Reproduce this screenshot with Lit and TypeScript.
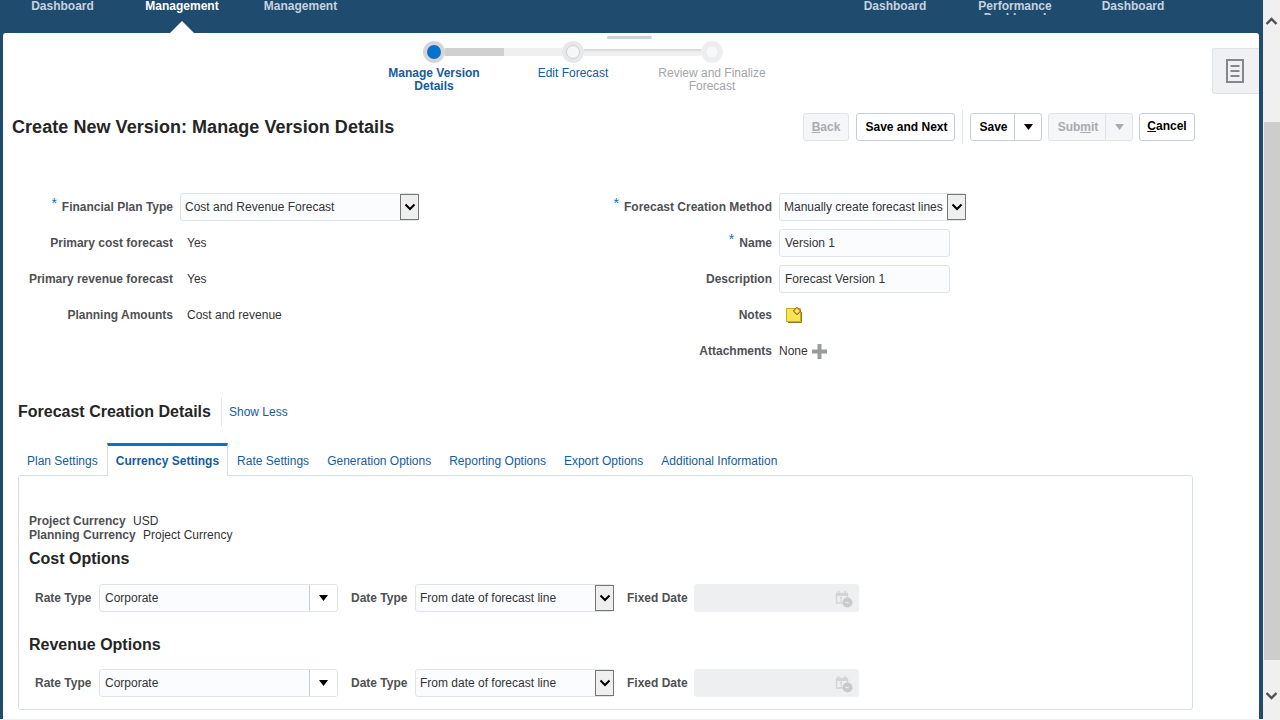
import { LitElement, html, css, svg } from "lit";
import { customElement } from "lit/decorators.js";

const chevron = html`<svg width="12" height="8" viewBox="0 0 12 8"><path d="M1.5 1.5 L6 6 L10.5 1.5" fill="none" stroke="#000" stroke-width="2"/></svg>`;
const arrow = (color: string) =>
  html`<svg width="9" height="6" viewBox="0 0 9 6"><path d="M0 0 H9 L4.5 6 Z" fill="${color}"/></svg>`;

const calIcon = svg`<svg width="18" height="18" viewBox="0 0 18 18">
  <path d="M1.5 3.5 H12.5 V13 H1.5 Z" fill="none" stroke="#d3d4d6" stroke-width="1.4"/>
  <path d="M1 3 H13 V6 H1 Z" fill="#d3d4d6"/>
  <path d="M3.5 1 V4 M10 1 V4" stroke="#d3d4d6" stroke-width="1.6"/>
  <path d="M5 8 L6.3 7.2 V12" fill="none" stroke="#d3d4d6" stroke-width="1.1"/>
  <circle cx="12.5" cy="12.5" r="5" fill="#c9cacc"/>
  <path d="M10.5 12.5 H13.5" stroke="#eeeff0" stroke-width="1.2"/>
</svg>`;

@customElement("app-root")
export class AppRoot extends LitElement {
  static styles = css`
    :host {
      display: block;
      width: 1280px;
      height: 720px;
      overflow: hidden;
      position: relative;
      background: #1f4b6e;
      font-family: "Liberation Sans", Arial, sans-serif;
      font-size: 12px;
      color: #333;
    }
    .shell {
      display: flex;
      height: 719px;
    }
    .main {
      width: 1263px;
    }
    .bottom {
      height: 1px;
      background: #eceef0;
    }

    /* top nav */
    .nav {
      height: 33px;
      position: relative;
      display: flex;
      font-weight: bold;
      line-height: 12px;
      color: #c4d3e0;
    }
    .nav-item {
      width: 74px;
      height: 15px;
      overflow: hidden;
      text-align: center;
      flex: none;
    }
    .nav-item.on {
      color: #fff;
    }
    .notch {
      position: absolute;
      left: 170px;
      top: 21px;
      width: 0;
      height: 0;
      border-left: 12px solid transparent;
      border-right: 12px solid transparent;
      border-bottom: 12px solid #fff;
    }

    .panel {
      position: relative;
      height: 686px;
      margin: 0 4px 0 3px;
      background: #fff;
      border-radius: 3px 3px 0 0;
    }
    .handle {
      position: absolute;
      left: 604px;
      top: 3px;
      width: 45px;
      height: 3px;
      border-radius: 2px;
      background: #cdd1de;
    }
    .side-tab {
      position: absolute;
      right: 0;
      top: 15px;
      width: 47px;
      height: 46px;
      box-sizing: border-box;
      background: #f0f1f2;
      border: 1px solid #dfe2e6;
      border-right: none;
      border-radius: 3px 0 0 3px;
      display: flex;
      align-items: center;
      justify-content: center;
      padding-right: 3px;
    }

    /* train */
    .train {
      display: flex;
      padding: 8px 0 0 361.5px;
      height: 51px;
    }
    .step {
      width: 139px;
      display: flex;
      flex-direction: column;
      align-items: center;
    }
    .track {
      display: flex;
      align-items: center;
      width: 100%;
      height: 22px;
    }
    .seg {
      flex: 1;
      height: 8px;
    }
    .seg.none {
      background: transparent;
    }
    .seg.done {
      background: #d0d0d0;
    }
    .seg.rest {
      background: #efefef;
    }
    .seg.thin {
      height: 7px;
      background: linear-gradient(#d0d0d0, #eeeeee 40%, #f2f2f2);
    }
    .dot {
      width: 22px;
      height: 22px;
      box-sizing: border-box;
      border-radius: 50%;
      flex: none;
      display: flex;
      align-items: center;
      justify-content: center;
      background: #e8e8e8;
    }
    .dot i {
      display: block;
      width: 14px;
      height: 14px;
      box-sizing: border-box;
      border-radius: 50%;
    }
    .dot.current {
      background: #d5d5d5;
    }
    .dot.current i {
      background: #0572ce;
    }
    .dot.next i {
      background: #f6f7f8;
      border: 1px solid #c9d0d8;
    }
    .dot.later {
      background: #eeeeee;
    }
    .dot.later i {
      background: #f6f7f8;
      border: 1px solid #e6e8ea;
    }
    .step-label {
      width: 120px;
      margin-top: 4px;
      text-align: center;
      line-height: 13px;
      color: #145c9e;
    }
    .step-label.current {
      font-weight: bold;
    }
    .step-label.later {
      color: #a3a5a8;
    }

    /* title + toolbar */
    .title-row {
      display: flex;
      align-items: center;
      height: 34px;
      margin-top: 18px;
      padding-left: 9px;
    }
    h1 {
      margin: 0;
      font-size: 18px;
      line-height: 22px;
      color: #252525;
      flex: 1;
      letter-spacing: 0.05px;
    }
    .toolbar {
      display: flex;
      align-items: center;
      padding-right: 64px;
      height: 34px;
    }
    .btn {
      box-sizing: border-box;
      height: 28px;
      display: flex;
      align-items: center;
      justify-content: center;
      background: #fff;
      border: 1px solid #c4ced7;
      border-radius: 3px;
      font-weight: bold;
      color: #000;
    }
    .btn.off {
      background: #f5f6f7;
      border-color: #dfe4ea;
      color: #a9abae;
    }
    .btn.raised {
      padding-bottom: 2px;
    }
    .btn.nudge {
      padding-left: 2px;
    }
    .btn .part {
      height: 100%;
      display: flex;
      align-items: center;
      justify-content: center;
      box-sizing: border-box;
    }
    .btn .part.label {
      padding-left: 2px;
    }
    .btn .part + .part {
      border-left: 1px solid #c4ced7;
    }
    .btn.off .part + .part {
      border-left-color: #dfe4ea;
    }
    .tool-sep {
      width: 1px;
      height: 34px;
      background: #dfe4ea;
      margin: 0 7px;
    }

    /* form */
    .form {
      display: flex;
      margin-top: 49px;
    }
    .grid {
      display: grid;
      grid-auto-rows: 28px;
      row-gap: 8px;
      column-gap: 7px;
      align-items: center;
    }
    .grid.left {
      grid-template-columns: 170px 420px;
    }
    .grid.right {
      grid-template-columns: 172px 300px;
    }
    .lbl {
      text-align: right;
      font-weight: bold;
      color: #4f5052;
    }
    .req {
      color: #0572ce;
      font-weight: normal;
      font-size: 14px;
      line-height: 10px;
      position: relative;
      top: -3px;
      margin-right: 5px;
    }
    .val {
      padding-left: 7px;
    }
    .val.flush {
      padding-left: 0;
      display: flex;
      align-items: center;
      gap: 4px;
    }
    .field {
      box-sizing: border-box;
      height: 28px;
      display: flex;
      align-items: center;
      background: #fbfcfe;
      border: 1px solid #dfe4ea;
      border-radius: 3px;
      padding-left: 5px;
      color: #333;
    }
    .field.sel {
      padding-left: 4px;
    }
    .field .txt {
      flex: 1;
      white-space: nowrap;
    }
    .native {
      box-sizing: border-box;
      width: 19px;
      height: 26px;
      flex: none;
      margin-right: -1px;
      display: flex;
      align-items: center;
      justify-content: center;
      background: #efefef;
      border: 1px solid #767676;
    }
    .drop {
      box-sizing: border-box;
      width: 28px;
      height: 100%;
      flex: none;
      display: flex;
      align-items: center;
      justify-content: center;
      background: #fff;
      border-left: 1px solid #c4ced7;
      border-radius: 0 3px 3px 0;
    }
    .note {
      margin-left: 7px;
      display: block;
    }

    /* section */
    .section-head {
      display: flex;
      align-items: center;
      height: 28px;
      margin-top: 33px;
      padding-left: 15px;
    }
    h2 {
      margin: 0;
      font-size: 16px;
      line-height: 20px;
      color: #252525;
    }
    .section-head .sep {
      width: 1px;
      height: 28px;
      background: #dfe4ea;
      margin: 0 7px 0 10px;
    }
    .link {
      color: #145c9e;
    }
    .tabs {
      display: flex;
      height: 33px;
      margin: 17px 0 0 15px;
      position: relative;
    }
    .tab {
      box-sizing: border-box;
      height: 33px;
      padding: 3px 9px 0;
      display: flex;
      align-items: center;
      color: #145c9e;
      white-space: nowrap;
    }
    .tab.on {
      border: 1px solid #d6dfe6;
      border-top: 3px solid #0572ce;
      border-bottom: none;
      padding: 0 8px;
      background: #fff;
      font-weight: bold;
      position: relative;
      z-index: 1;
      height: 33px;
    }
    .tab-body {
      box-sizing: border-box;
      height: 235px;
      width: 1175px;
      margin: -1px 0 0 15px;
      padding: 38px 0 0 10px;
      border: 1px solid #d6dfe6;
      border-radius: 3px;
    }
    .info {
      line-height: 14px;
    }
    .info b {
      color: #4f5052;
      margin-right: 4px;
    }
    h3 {
      margin: 8px 0 0;
      font-size: 16px;
      line-height: 18px;
      color: #252525;
    }
    h3.rev {
      margin-top: 24px;
    }
    .opts {
      display: flex;
      align-items: center;
      height: 28px;
      margin-top: 16px;
      padding-left: 6px;
    }
    .opts.rev {
      margin-top: 15px;
    }
    .opts .lbl {
      white-space: nowrap;
      text-align: left;
      width: 57px;
      flex: none;
    }
    .opts .lbl.wide {
      width: 61px;
    }
    .opts .field.rate {
      width: 239px;
      margin: 0 13px 0 7px;
    }
    .opts .field.date {
      width: 199px;
      margin: 0 13px 0 7px;
    }
    .fixed {
      box-sizing: border-box;
      width: 165px;
      height: 28px;
      margin-left: 6px;
      background: #eeeff0;
      border-radius: 3px;
      display: flex;
      align-items: center;
      justify-content: flex-end;
      padding: 2px 6px 0 0;
    }

    /* scrollbar */
    .scroll {
      width: 17px;
      height: 720px;
      background: #f0f0f0;
      position: relative;
      flex: none;
      display: flex;
      flex-direction: column;
      align-items: center;
    }
    .sb-up {
      height: 122px;
      width: 100%;
      display: flex;
      justify-content: center;
      padding-top: 17px;
      box-sizing: border-box;
    }
    .thumb {
      height: 538px;
      width: 16px;
      margin-left: 1px;
      background: #cdcdcd;
    }
    .sb-down {
      display: flex;
      justify-content: center;
      padding-top: 32px;
    }
  `;

  private rateRow(rev = false) {
    return html`
      <div class="opts ${rev ? "rev" : ""}">
        <span class="lbl">Rate Type</span>
        <div class="field rate">
          <span class="txt">Corporate</span>
          <span class="drop">${arrow("#000")}</span>
        </div>
        <span class="lbl">Date Type</span>
        <div class="field sel date">
          <span class="txt">From date of forecast line</span>
          <span class="native">${chevron}</span>
        </div>
        <span class="lbl wide">Fixed Date</span>
        <div class="fixed">${calIcon}</div>
      </div>
    `;
  }

  render() {
    return html`
      <div class="shell">
        <div class="main">
          <div class="nav">
            <div class="nav-item" style="margin-left:25.5px">Dashboard</div>
            <div class="nav-item on" style="margin-left:45.5px">Management</div>
            <div class="nav-item" style="margin-left:44.5px">Management</div>
            <div class="nav-item" style="margin-left:520.5px">Dashboard</div>
            <div class="nav-item" style="margin-left:46px">Performance Dashboard</div>
            <div class="nav-item" style="margin-left:44px">Dashboard</div>
            <div class="notch"></div>
          </div>
          <div class="panel">
            <div class="handle"></div>
            <div class="side-tab">
              <svg width="18" height="24" viewBox="0 0 18 24">
                <path d="M1 1 H17 V23 H1 Z" fill="none" stroke="#85888b" stroke-width="2"/>
                <path d="M4.5 7 H13.5 M4.5 12 H13.5 M4.5 17 H13.5" stroke="#85888b" stroke-width="2"/>
              </svg>
            </div>

            <div class="train">
              <div class="step">
                <div class="track"><span class="seg none"></span><span class="dot current"><i></i></span><span class="seg done"></span></div>
                <div class="step-label current">Manage Version Details</div>
              </div>
              <div class="step">
                <div class="track"><span class="seg rest"></span><span class="dot next"><i></i></span><span class="seg thin"></span></div>
                <div class="step-label">Edit Forecast</div>
              </div>
              <div class="step">
                <div class="track"><span class="seg thin"></span><span class="dot later"><i></i></span><span class="seg none"></span></div>
                <div class="step-label later">Review and Finalize Forecast</div>
              </div>
            </div>

            <div class="title-row">
              <h1>Create New Version: Manage Version Details</h1>
              <div class="toolbar">
                <div class="btn off" style="width:46px"><span><u>B</u>ack</span></div>
                <div class="btn nudge" style="width:99px;margin-left:7px">Save and Next</div>
                <div class="tool-sep"></div>
                <div class="btn" style="width:72px">
                  <span class="part label" style="width:43px">Save</span>
                  <span class="part" style="width:27px">${arrow("#000")}</span>
                </div>
                <div class="btn off" style="width:85px;margin-left:6px">
                  <span class="part label" style="width:56px">Sub<u>m</u>it</span>
                  <span class="part" style="width:27px">${arrow("#a9abae")}</span>
                </div>
                <div class="btn raised" style="width:56px;margin-left:6px"><span><u>C</u>ancel</span></div>
              </div>
            </div>

            <div class="form">
              <div class="grid left">
                <span class="lbl"><span class="req">*</span>Financial Plan Type</span>
                <div class="field sel" style="width:239px">
                  <span class="txt">Cost and Revenue Forecast</span>
                  <span class="native">${chevron}</span>
                </div>
                <span class="lbl">Primary cost forecast</span>
                <span class="val">Yes</span>
                <span class="lbl">Primary revenue forecast</span>
                <span class="val">Yes</span>
                <span class="lbl">Planning Amounts</span>
                <span class="val">Cost and revenue</span>
              </div>
              <div class="grid right">
                <span class="lbl"><span class="req">*</span>Forecast Creation Method</span>
                <div class="field sel" style="width:187px">
                  <span class="txt">Manually create forecast lines</span>
                  <span class="native">${chevron}</span>
                </div>
                <span class="lbl"><span class="req">*</span>Name</span>
                <div class="field" style="width:171px">Version 1</div>
                <span class="lbl">Description</span>
                <div class="field" style="width:171px">Forecast Version 1</div>
                <span class="lbl">Notes</span>
                <svg class="note" width="17" height="17" viewBox="0 0 17 17">
                  <path d="M0.5 1.5 H14.5 V14.5 H0.5 Z" fill="#f7e354" stroke="#c9a91f"/>
                  <path d="M2 15.5 H15.5 V5" fill="none" stroke="#8f7a20" stroke-width="1"/>
                  <path d="M11 0.2 L14.8 4 L11 7.8 L7.2 4 Z" fill="#f2a91c" stroke="#7d4a10" stroke-width="0.8"/>
                  <path d="M11 2 V6 M9 4 H13" stroke="#fff6c8" stroke-width="1.1"/>
                </svg>
                <span class="lbl">Attachments</span>
                <span class="val flush">None
                  <svg width="15" height="15" viewBox="0 0 15 15"><path d="M5.5 0 H9.5 V5.5 H15 V9.5 H9.5 V15 H5.5 V9.5 H0 V5.5 H5.5 Z" fill="#9a9b9d"/></svg>
                </span>
              </div>
            </div>

            <div class="section-head">
              <h2>Forecast Creation Details</h2>
              <span class="sep"></span>
              <span class="link">Show Less</span>
            </div>

            <div class="tabs">
              <div class="tab">Plan Settings</div>
              <div class="tab on">Currency Settings</div>
              <div class="tab">Rate Settings</div>
              <div class="tab">Generation Options</div>
              <div class="tab">Reporting Options</div>
              <div class="tab">Export Options</div>
              <div class="tab">Additional Information</div>
            </div>
            <div class="tab-body">
              <div class="info"><b>Project Currency</b> USD</div>
              <div class="info"><b>Planning Currency</b> Project Currency</div>
              <h3>Cost Options</h3>
              ${this.rateRow()}
              <h3 class="rev">Revenue Options</h3>
              ${this.rateRow(true)}
            </div>
          </div>
        </div>
        <div class="scroll">
          <div class="sb-up">
            <svg width="13" height="8" viewBox="0 0 13 8"><path d="M1.5 7 L6.5 2 L11.5 7" fill="none" stroke="#505050" stroke-width="2.4"/></svg>
          </div>
          <div class="thumb"></div>
          <div class="sb-down">
            <svg width="13" height="8" viewBox="0 0 13 8"><path d="M1.5 1 L6.5 6 L11.5 1" fill="none" stroke="#505050" stroke-width="2.4"/></svg>
          </div>
        </div>
      </div>
      <div class="bottom"></div>
    `;
  }
}
